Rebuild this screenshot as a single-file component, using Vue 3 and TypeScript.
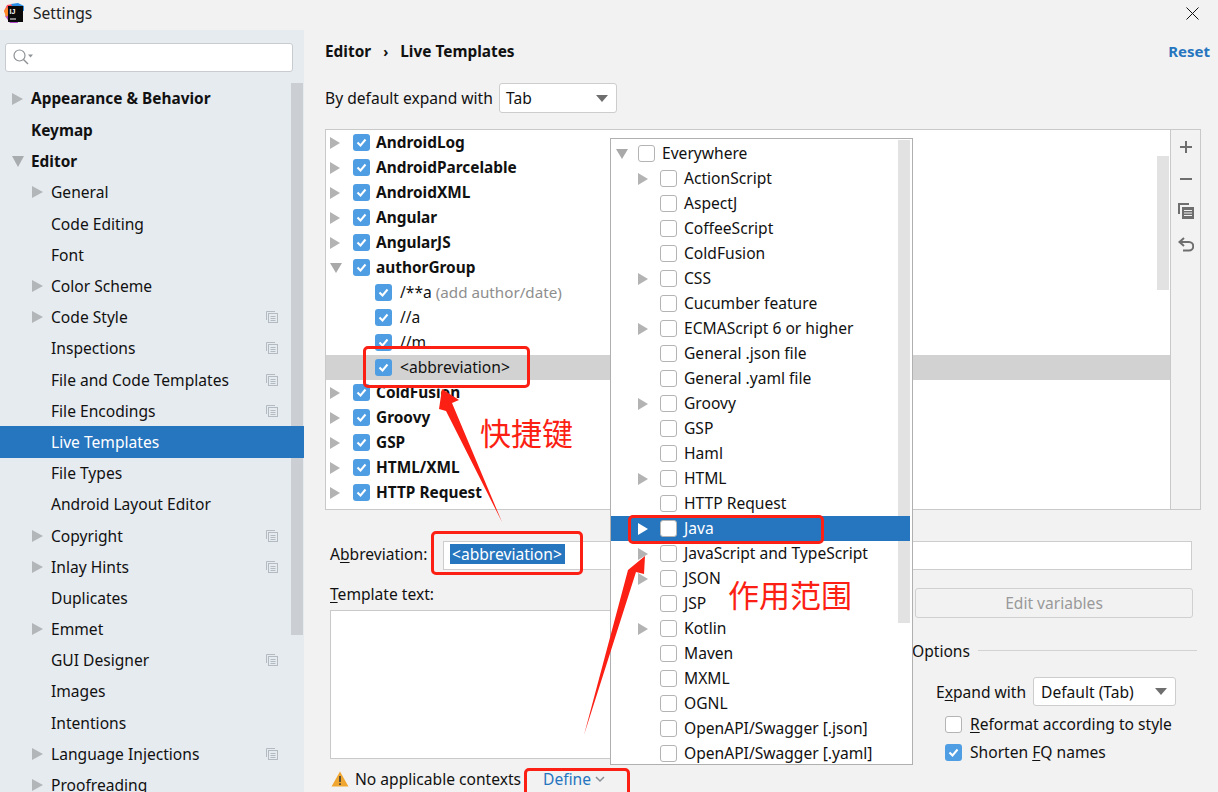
<script setup lang="ts">
interface SideItem { label: string; level: number; arrow?: 'right' | 'down'; bold?: boolean; copy?: boolean; selected?: boolean }
interface TreeItem { label: string; bold?: boolean; child?: boolean; arrow?: 'right' | 'down'; hint?: string; selected?: boolean }
interface PopItem { label: string; arrow?: boolean }

const side: SideItem[] = [
  { label: 'Appearance & Behavior', level: 0, arrow: 'right', bold: true },
  { label: 'Keymap', level: 0, bold: true },
  { label: 'Editor', level: 0, arrow: 'down', bold: true },
  { label: 'General', level: 1, arrow: 'right' },
  { label: 'Code Editing', level: 1 },
  { label: 'Font', level: 1 },
  { label: 'Color Scheme', level: 1, arrow: 'right' },
  { label: 'Code Style', level: 1, arrow: 'right', copy: true },
  { label: 'Inspections', level: 1, copy: true },
  { label: 'File and Code Templates', level: 1, copy: true },
  { label: 'File Encodings', level: 1, copy: true },
  { label: 'Live Templates', level: 1, selected: true },
  { label: 'File Types', level: 1 },
  { label: 'Android Layout Editor', level: 1 },
  { label: 'Copyright', level: 1, arrow: 'right', copy: true },
  { label: 'Inlay Hints', level: 1, arrow: 'right', copy: true },
  { label: 'Duplicates', level: 1 },
  { label: 'Emmet', level: 1, arrow: 'right' },
  { label: 'GUI Designer', level: 1, copy: true },
  { label: 'Images', level: 1 },
  { label: 'Intentions', level: 1 },
  { label: 'Language Injections', level: 1, arrow: 'right', copy: true },
  { label: 'Proofreading', level: 1, arrow: 'right' },
]

const tree: TreeItem[] = [
  { label: 'AndroidLog', bold: true, arrow: 'right' },
  { label: 'AndroidParcelable', bold: true, arrow: 'right' },
  { label: 'AndroidXML', bold: true, arrow: 'right' },
  { label: 'Angular', bold: true, arrow: 'right' },
  { label: 'AngularJS', bold: true, arrow: 'right' },
  { label: 'authorGroup', bold: true, arrow: 'down' },
  { label: '/**a', child: true, hint: '(add author/date)' },
  { label: '//a', child: true },
  { label: '//m', child: true },
  { label: '<abbreviation>', child: true, selected: true },
  { label: 'ColdFusion', bold: true, arrow: 'right' },
  { label: 'Groovy', bold: true, arrow: 'right' },
  { label: 'GSP', bold: true, arrow: 'right' },
  { label: 'HTML/XML', bold: true, arrow: 'right' },
  { label: 'HTTP Request', bold: true, arrow: 'right' },
  { label: '', bold: true },
]

const pop: PopItem[] = [
  { label: 'ActionScript', arrow: true },
  { label: 'AspectJ' },
  { label: 'CoffeeScript' },
  { label: 'ColdFusion' },
  { label: 'CSS', arrow: true },
  { label: 'Cucumber feature' },
  { label: 'ECMAScript 6 or higher', arrow: true },
  { label: 'General .json file' },
  { label: 'General .yaml file' },
  { label: 'Groovy', arrow: true },
  { label: 'GSP' },
  { label: 'Haml' },
  { label: 'HTML', arrow: true },
  { label: 'HTTP Request' },
  { label: 'Java', arrow: true },
  { label: 'JavaScript and TypeScript', arrow: true },
  { label: 'JSON', arrow: true },
  { label: 'JSP' },
  { label: 'Kotlin', arrow: true },
  { label: 'Maven' },
  { label: 'MXML' },
  { label: 'OGNL' },
  { label: 'OpenAPI/Swagger [.json]' },
  { label: 'OpenAPI/Swagger [.yaml]' },
]
</script>

<template>
  <div class="app">
    <header class="titlebar">
      <svg class="logo" width="21" height="21" viewBox="0 0 21 21">
        <polygon points="0,8 3,2 9,1 9,12 4,14" fill="#fb4f5f" />
        <polygon points="7,1 14,0 20,3 20,8 10,6" fill="#2b8fe8" />
        <polygon points="1,13 6,20 14,20 12,12 5,9" fill="#b04ac8" />
        <polygon points="0,8 3,4 6,11 2,14" fill="#ff8a2b" />
        <rect x="4" y="3" width="15" height="16" fill="#0a0a0a" />
        <text x="5.500" y="10.500" class="logo-text">IJ</text>
        <rect x="6" y="15.500" width="6" height="1" fill="#fff" />
      </svg>
      <span class="title">Settings</span>
      <svg class="close" width="13" height="13" viewBox="0 0 13 13">
        <path d="M.5.5l12 12M12.500.5l-12 12" stroke="#111" stroke-width="1" fill="none" />
      </svg>
    </header>

    <div class="body">
      <aside class="sidebar">
        <div class="search">
          <svg width="22" height="17" viewBox="0 0 22 17">
            <circle cx="6.500" cy="6.500" r="5.500" fill="none" stroke="#8d9296" stroke-width="1.200" />
            <path d="M10.500 10.500l4.500 4.500" stroke="#8d9296" stroke-width="1.400" />
            <path d="M15 5.500h5l-2.500 3z" fill="#8d9296" />
          </svg>
        </div>
        <div class="side-tree">
          <div class="side-list">
            <div v-for="s in side" :key="s.label" class="side-row" :class="{ sel: s.selected, lvl1: s.level === 1, bold: s.bold }">
              <span class="arrow-slot">
                <svg v-if="s.arrow === 'right'" width="11" height="12" viewBox="0 0 11 12"><path d="M0 0l11 6-11 6z" fill="#b3b6b8" /></svg>
                <svg v-else-if="s.arrow === 'down'" width="12" height="11" viewBox="0 0 12 11"><path d="M0 0h12l-6 11z" fill="#a9acae" /></svg>
              </span>
              <span class="side-label">{{ s.label }}</span>
              <svg v-if="s.copy" class="side-copy" width="12" height="12" viewBox="0 0 12 12">
                <path d="M.5 9V.5H9" fill="none" stroke="#b3bac1" />
                <rect x="2.500" y="2.500" width="9" height="9" fill="#e6ebf0" stroke="#b3bac1" />
                <path d="M4.500 5.500h5M4.500 7.500h5M4.500 9.500h5" stroke="#b3bac1" />
              </svg>
            </div>
          </div>
          <div class="side-scroll"></div>
        </div>
      </aside>

      <main class="main">
        <div class="crumbs">
          <b>Editor</b><span class="sep">›</span><b>Live Templates</b>
          <a class="reset">Reset</a>
        </div>

        <div class="expand-row">
          <span class="default-label">By default expand with</span>
          <div class="select tab">
            <span>Tab</span>
            <i class="caret"></i>
          </div>
        </div>

        <section class="tree-panel">
          <div class="tree-list">
            <div v-for="(t, i) in tree" :key="i" class="tree-row" :class="{ sel: t.selected, child: t.child }">
              <span class="tree-arrow">
                <svg v-if="t.arrow === 'right'" width="10" height="12" viewBox="0 0 10 12"><path d="M0 0l10 6-10 6z" fill="#b3b3b3" /></svg>
                <svg v-else-if="t.arrow === 'down'" width="12" height="10" viewBox="0 0 12 10"><path d="M0 0h12l-6 10z" fill="#a9a9a9" /></svg>
              </span>
              <span class="cb on">
                <svg width="17" height="17" viewBox="0 0 17 17"><path d="M4.500 8.500l3 3 5-6" fill="none" stroke="#fff" stroke-width="2" /></svg>
              </span>
              <span class="tree-label" :class="{ bold: t.bold }">{{ t.label }}<span v-if="t.hint" class="hint">{{ t.hint }}</span></span>
            </div>
            <div class="tree-scroll"></div>
          </div>
          <div class="toolbar">
            <svg width="14" height="14" viewBox="0 0 14 14"><path d="M7 1v12M1 7h12" stroke="#6e6e6e" stroke-width="2" /></svg>
            <svg width="14" height="14" viewBox="0 0 14 14"><path d="M1 7h12" stroke="#6e6e6e" stroke-width="2" /></svg>
            <svg width="16" height="16" viewBox="0 0 16 16">
              <path d="M1 11V1h10" fill="none" stroke="#6e6e6e" stroke-width="2" />
              <rect x="4" y="4" width="12" height="12" fill="#6e6e6e" />
              <path d="M6 7.500h8M6 10h8M6 12.500h8" stroke="#f2f2f2" />
            </svg>
            <svg width="16" height="16" viewBox="0 0 16 16">
              <path d="M2 5h9a4 4 0 0 1 0 8.500H5" fill="none" stroke="#6e6e6e" stroke-width="2" />
              <path d="M6 1L1.500 5 6 9" fill="none" stroke="#6e6e6e" stroke-width="2" />
            </svg>
          </div>
        </section>

        <div class="abbr-row">
          <label class="abbr-label">A<u>b</u>breviation:</label>
          <div class="abbr-input"><span class="abbr-sel">&lt;abbreviation&gt;</span></div>
        </div>

        <div class="lower">
          <div class="left-col">
            <div class="tpl-label"><u>T</u>emplate text:</div>
            <div class="tpl-text"></div>
          </div>
          <div class="right-col">
            <button class="edit-btn">Edit variables</button>
            <div class="opt-head"><span class="up">Options</span><i></i></div>
            <div class="opt-expand">
              <span class="expand-label">E<u>x</u>pand with</span>
              <div class="select dflt"><span>Default (Tab)</span><i class="caret"></i></div>
            </div>
            <div class="opt-check first"><span class="cb off"></span><span><u>R</u>eformat according to style</span></div>
            <div class="opt-check">
              <span class="cb on"><svg width="17" height="17" viewBox="0 0 17 17"><path d="M4.500 8.500l3 3 5-6" fill="none" stroke="#fff" stroke-width="2" /></svg></span>
              <span>Shorten <u>F</u>Q names</span>
            </div>
          </div>
        </div>

        <div class="ctx-row">
          <svg width="18" height="16" viewBox="0 0 18 16">
            <path d="M9 .5L17.500 15.500H.5z" fill="#f0a732" />
            <path d="M9 5v6M9 12.300v1.800" stroke="#3a3a3a" stroke-width="1.600" />
          </svg>
          <span class="ctx-text">No applicable contexts</span>
          <a class="define"><span>Define</span>
            <svg width="10" height="7" viewBox="0 0 10 7"><path d="M1 1l4 4 4-4" fill="none" stroke="#8a8f94" stroke-width="1.500" /></svg>
          </a>
        </div>
      </main>
    </div>

    <div class="popup">
      <div class="pop-row top">
        <svg class="pop-down" width="12" height="10" viewBox="0 0 12 10"><path d="M0 0h12l-6 10z" fill="#a9a9a9" /></svg>
        <span class="cb off"></span>
        <span class="up">Everywhere</span>
      </div>
      <div v-for="p in pop" :key="p.label" class="pop-row" :class="{ sel: p.label === 'Java' }">
        <span class="pop-arrow">
          <svg v-if="p.arrow" width="10" height="12" viewBox="0 0 10 12"><path d="M0 0l10 6-10 6z" :fill="p.label === 'Java' ? '#fff' : '#b3b3b3'" /></svg>
        </span>
        <span class="cb off"></span>
        <span class="up">{{ p.label }}</span>
      </div>
      <div class="pop-scroll"></div>
    </div>

    <div class="mark m1"></div>
    <div class="mark m2"></div>
    <div class="mark m3"></div>
    <div class="mark m4"></div>

    <svg class="arrows" width="1218" height="792" viewBox="0 0 1218 792">
      <polygon points="442,389 459,400 452,403 502,522 446,411 439,409" fill="#fb1f14" />
      <polygon points="645,556 644,574 636,572 584,735 628,570" fill="#fb1f14" />
    </svg>

    <div class="note n1">快捷键</div>
    <div class="note n2">作用范围</div>
  </div>
</template>

<style scoped>
.app {
  position: relative;
  width: 1218px;
  height: 792px;
  overflow: hidden;
  background: #f2f2f2;
  font-family: "Noto Sans", "Open Sans", sans-serif;
  font-size: 15.6px;
  color: #111;
}
.up { position: relative; top: -1px; }
.bold, b { font-size: 15.4px; }
u { text-underline-offset: 2px; }
.titlebar {
  height: 30px;
  display: flex;
  align-items: center;
  padding-left: 4px;
  padding-right: 19px;
}
.logo { flex: none; margin-top: -4px; }
.title { margin-left: 8px; margin-top: -4px; color: #222; }
.logo-text { font: 700 7px "Liberation Sans", sans-serif; fill: #fff; }
.close { margin-left: auto; margin-top: -3px; }
.body { display: flex; height: 762px; }
.sidebar {
  width: 304px;
  flex: none;
  background: #e6ebf0;
  overflow: hidden;
}
.search {
  margin: 13px 11px 0 5px;
  height: 29px;
  box-sizing: border-box;
  background: #fff;
  border: 1px solid #c8ccd0;
  border-radius: 3px;
  display: flex;
  align-items: center;
  padding-left: 7px;
}
.side-tree { display: flex; margin-top: 11.3px; }
.side-list { width: 287px; flex: none; }
.side-row {
  height: 31.2px;
  display: flex;
  align-items: center;
  padding-left: 12px;
  padding-right: 9px;
}
.side-row.lvl1 { padding-left: 32px; }
.side-row.bold { font-weight: 700; }
.side-row.sel { background: #2675bf; color: #fff; width: 304px; box-sizing: border-box; position: relative; z-index: 1; }
.arrow-slot { width: 19px; flex: none; display: flex; align-items: center; }
.side-copy { margin-left: auto; flex: none; }
.side-scroll {
  width: 12px;
  height: 552px;
  margin-left: 4px;
  background: #cbcfd4;
  flex: none;
}
.main {
  flex: 1;
  min-width: 0;
  padding-left: 21px;
  padding-right: 8px;
  display: flex;
  flex-direction: column;
  overflow: hidden;
}
.main > * { flex: none; }
.crumbs {
  margin-top: 10px;
  height: 22px;
  display: flex;
  align-items: center;
}
.sep { margin: 0 12px 0 12px; font-weight: 700; font-size: 14px; }
.reset { margin-left: auto; color: #2675bf; font-weight: 700; font-size: 15px; }
.expand-row {
  margin-top: 21px;
  height: 30px;
  display: flex;
  align-items: center;
}
.default-label { width: 166px; flex: none; white-space: nowrap; }
.select {
  height: 100%;
  box-sizing: border-box;
  background: #fff;
  border: 1px solid #cdcdcd;
  border-radius: 3px;
  display: flex;
  align-items: center;
  justify-content: space-between;
}
.tab { width: 118px; margin-left: 8px; padding: 0 8px 0 6px; }
.caret {
  width: 0;
  height: 0;
  border-left: 6px solid transparent;
  border-right: 6px solid transparent;
  border-top: 7px solid #6e6e6e;
}
.tree-panel {
  margin-top: 16px;
  width: 876px;
  height: 381px;
  box-sizing: border-box;
  border: 1px solid #c9c9c9;
  display: flex;
}
.tree-list {
  position: relative;
  flex: 1;
  min-width: 0;
  background: #fff;
  overflow: hidden;
}
.tree-row {
  height: 25px;
  display: flex;
  align-items: center;
  padding-left: 4px;
}
.tree-row.sel { background: #d2d2d2; }
.tree-row.child { padding-left: 49px; }
.tree-arrow { width: 23px; flex: none; display: flex; }
.tree-row.child .tree-arrow { display: none; }
.tree-label { margin-left: 6px; white-space: nowrap; }
.tree-row.child .tree-label { margin-left: 8px; position: relative; top: -1px; }
.bold { font-weight: 700; }
.hint { color: #8e8e8e; margin-left: 4px; font-size: 15.2px; }
.cb {
  width: 17px;
  height: 17px;
  flex: none;
  box-sizing: border-box;
  border-radius: 3px;
  display: block;
}
.cb.on { background: #4f9ee3; }
.cb.off { background: #fff; border: 1px solid #b4b4b4; }
.cb svg { display: block; }
.tree-scroll {
  position: absolute;
  right: 1px;
  top: 26px;
  width: 12px;
  height: 134px;
  background: #e2e2e2;
}
.toolbar {
  width: 30px;
  flex: none;
  box-sizing: border-box;
  border-left: 1px solid #c9c9c9;
  display: flex;
  flex-direction: column;
  align-items: center;
  padding-top: 10px;
  gap: 17.500px;
}
.abbr-row {
  margin-top: 31px;
  margin-left: 5px;
  height: 29px;
  display: flex;
  align-items: center;
}
.abbr-label { width: 113px; flex: none; position: relative; top: -2px; }
.abbr-input {
  width: 749px;
  height: 100%;
  box-sizing: border-box;
  background: #fff;
  border: 1px solid #cdcdcd;
  display: flex;
  align-items: center;
  padding-left: 6px;
}
.abbr-sel { background: #2675bf; color: #fff; padding: 0 3px 0 2px; line-height: 20px; position: relative; top: -2px; }
.lower {
  margin-top: 15px;
  margin-left: 5px;
  display: grid;
  grid-template-columns: 582px 285px;
}
.tpl-label { height: 20px; line-height: 18px; }
.tpl-text {
  margin-top: 5px;
  height: 149px;
  width: 570px;
  box-sizing: border-box;
  background: #fff;
  border: 1px solid #c9c9c9;
}
.edit-btn {
  display: block;
  margin: 3px 0 0 3px;
  width: 278px;
  height: 30px;
  box-sizing: border-box;
  background: #f2f2f2;
  border: 1px solid #d0d0d0;
  border-radius: 3px;
  color: #999;
  font: inherit;
}
.opt-head { margin-top: 24px; height: 20px; display: flex; align-items: center; }
.opt-head i { flex: 1; height: 1px; background: #d2d2d2; margin-left: 8px; margin-bottom: 3px; }
.opt-expand {
  margin-top: 15px;
  margin-left: 24px;
  height: 29px;
  display: flex;
  align-items: center;
}
.expand-label { width: 88px; flex: none; white-space: nowrap; }
.dflt { width: 143px; margin-left: 9px; padding: 0 8px 0 7px; }
.opt-check {
  margin-left: 33px;
  height: 28px;
  display: flex;
  align-items: center;
  gap: 8px;
}
.opt-check.first { margin-top: 4px; }
.ctx-row {
  margin-top: 1px;
  margin-left: 6px;
  height: 24px;
  display: flex;
  align-items: center;
}
.ctx-text { margin-left: 6px; white-space: nowrap; }
.define { margin-left: 22px; color: #2675bf; display: inline-flex; align-items: center; gap: 4px; }
.popup {
  position: absolute;
  left: 610px;
  top: 138px;
  width: 303px;
  height: 627px;
  box-sizing: border-box;
  border: 1px solid #b0b0b0;
  background: #fff;
  padding-top: 2px;
  overflow: hidden;
  z-index: 2;
}
.pop-row {
  position: relative;
  height: 25px;
  box-sizing: border-box;
  display: flex;
  align-items: center;
  padding-left: 27px;
  gap: 7px;
  width: 299px;
  white-space: nowrap;
}
.pop-row.top { padding-left: 27px; }
.pop-row:not(.top) { padding-left: 49px; }
.pop-row.sel { background: #2675bf; color: #fff; z-index: 1; }
.pop-down { position: absolute; left: 5px; top: 8px; }
.pop-arrow { position: absolute; left: 27px; top: 7px; width: 10px; }
.pop-arrow svg { display: block; }
.pop-scroll {
  position: absolute;
  left: 287px;
  top: 1px;
  width: 12px;
  height: 483px;
  background: #e2e2e2;
}
.mark {
  position: absolute;
  box-sizing: border-box;
  border: 3px solid #fb1f14;
  border-radius: 5px;
  z-index: 3;
}
.m1 { left: 363px; top: 346px; width: 167px; height: 42px; }
.m2 { left: 431px; top: 531px; width: 152px; height: 44px; }
.m3 { left: 628px; top: 515px; width: 196px; height: 29px; }
.m4 { left: 524px; top: 768px; width: 106px; height: 40px; }
.arrows { position: absolute; left: 0; top: 0; z-index: 3; pointer-events: none; }
.note {
  position: absolute;
  z-index: 3;
  color: #fb1f14;
  font-family: "Noto Sans CJK SC", sans-serif;
  font-size: 31px;
  line-height: 36px;
  white-space: nowrap;
}
.n1 { left: 480px; top: 414px; }
.n2 { left: 728px; top: 576px; }
</style>

<style>
html, body { margin: 0; padding: 0; overflow: hidden; }
</style>
